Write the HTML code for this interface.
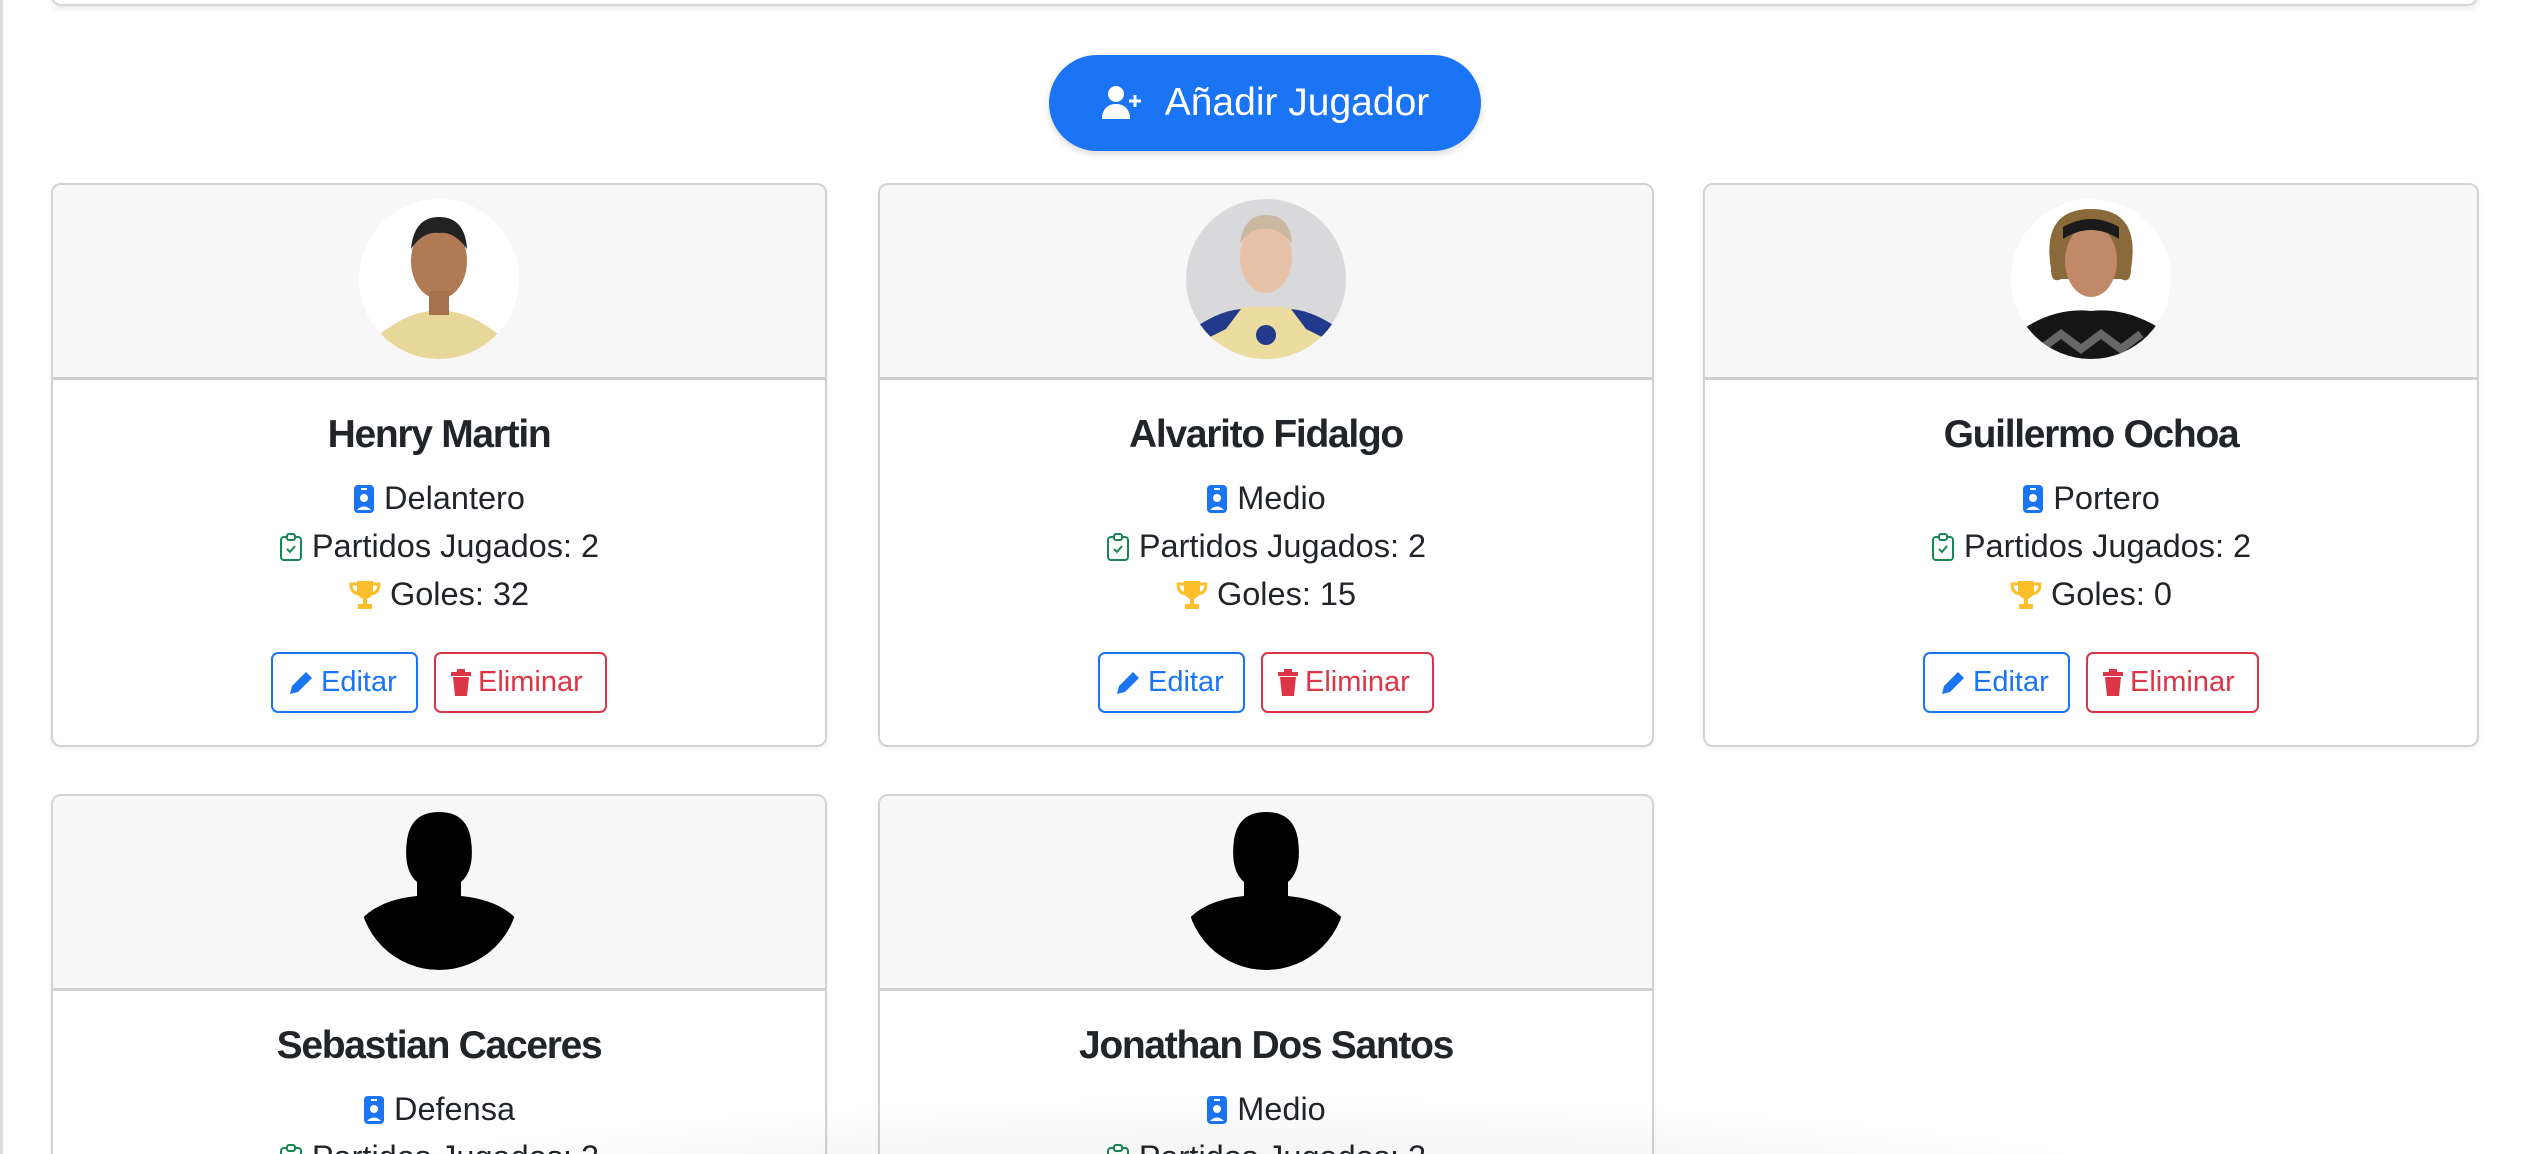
<!DOCTYPE html>
<html style="width:2522px;height:1154px;overflow:hidden"><head><meta charset="utf-8"><style>
*{box-sizing:border-box;margin:0;padding:0}
body{width:2522px;height:1154px;overflow:hidden;background:#fff;font-family:"Liberation Sans",Arial,sans-serif;color:#212529;position:relative}
.vline{position:absolute;left:0;top:0;width:3px;height:1154px;background:#ddd}
.topcard{position:absolute;left:51px;top:-20px;width:2427px;height:26px;border:2px solid #d6d6d6;border-radius:10px;box-shadow:0 3px 6px rgba(0,0,0,.08)}
.add{position:absolute;left:1049px;top:55px;width:432px;height:96px;border-radius:48px;background:#1b74f3;color:#fff;font-size:39px;display:flex;align-items:center;justify-content:center;gap:22px;box-shadow:0 3px 8px rgba(0,0,0,.15)}
.card{position:absolute;width:776px;height:564px;border:2px solid #d2d2d2;border-radius:10px;overflow:hidden;background:#fff;box-shadow:0 2px 5px rgba(0,0,0,.06)}
.hd{height:195px;background:#f7f7f7;border-bottom:3px solid #cfcfcf;position:relative}
.av{position:absolute;left:50%;top:14px;margin-left:-80px;width:160px;height:160px;border-radius:50%;overflow:hidden}
.name{position:absolute;top:228px;width:100%;text-align:center;font-weight:bold;font-size:39px;letter-spacing:-1.3px}
.ln{position:absolute;width:100%;text-align:center;font-size:32.5px;display:flex;justify-content:center;align-items:center;gap:9px}
.btns{position:absolute;top:467px;width:100%;display:flex;justify-content:center;gap:16px}
.b{height:61px;border:2px solid;border-radius:7px;font-size:29px;display:flex;align-items:center;padding:0 14px;gap:6px}
.ed{color:#1b74f3;border-color:#1b74f3;width:147px}
.el{color:#dc3545;border-color:#dc3545;width:173px}
.shade{position:absolute;left:200px;top:1090px;width:2100px;height:120px;background:radial-gradient(ellipse at 50% 100%,rgba(0,0,0,.07),rgba(0,0,0,0) 70%)}
</style></head><body>
<div class="vline"></div>
<div class="topcard"></div>
<div class="add"><svg width="42" height="36" viewBox="0 0 42 36"><circle cx="15" cy="9" r="8" fill="#fff"/><path d="M1 34c0-10 6-15 14-15s14 5 14 15z" fill="#fff"/><path d="M34 10v12M28 16h12" stroke="#fff" stroke-width="3"/></svg><span>Añadir Jugador</span></div>

<div class="card" style="left:51px;top:183px">
 <div class="hd"><div class="av"><svg width="160" height="160"><rect width="160" height="160" fill="#fff"/><path d="M0 160 L15 140 Q50 110 80 112 Q110 110 145 140 L160 160Z" fill="#e8d79a"/><ellipse cx="80" cy="62" rx="28" ry="38" fill="#b07a55"/><path d="M52 50 Q55 18 80 18 Q106 18 108 50 Q95 32 80 34 Q64 32 52 50Z" fill="#222"/><rect x="70" y="92" width="20" height="24" fill="#a8714d"/></svg></div></div>
 <div class="name">Henry Martin</div>
 <div class="ln" style="top:295px"><svg width="22" height="30"><rect x="1" y="1" width="20" height="28" rx="4" fill="#1b74f3"/><circle cx="11" cy="14" r="4" fill="#fff"/><path d="M4 26q7-7 14 0z" fill="#fff"/><rect x="8" y="4" width="6" height="2" fill="#fff"/></svg>Delantero</div>
 <div class="ln" style="top:343px"><svg width="24" height="30"><rect x="2" y="5" width="20" height="23" rx="3" fill="none" stroke="#198754" stroke-width="2"/><rect x="8" y="2" width="8" height="6" rx="2" fill="#fff" stroke="#198754" stroke-width="2"/><path d="M8 17l3 3 5-6" stroke="#198754" stroke-width="2" fill="none"/></svg>Partidos Jugados: 2</div>
 <div class="ln" style="top:391px"><svg width="32" height="32"><path d="M8 2h16v10a8 8 0 0 1-16 0z" fill="#fdbe2c"/><path d="M8 5H2q0 9 8 10M24 5h6q0 9-8 10" stroke="#fdbe2c" stroke-width="3" fill="none"/><rect x="14" y="19" width="4" height="6" fill="#fdbe2c"/><rect x="9" y="25" width="14" height="5" fill="#fdbe2c"/></svg>Goles: 32</div>
 <div class="btns"><div class="b ed"><svg width="28" height="28"><path d="M3 25l2-8L19 3l6 6-14 14z" fill="#1b74f3"/></svg>Editar</div><div class="b el"><svg width="22" height="28"><rect x="1" y="3" width="20" height="4" fill="#dc3545"/><rect x="7" y="0" width="8" height="4" fill="#dc3545"/><path d="M3 8h16l-2 19H5z" fill="#dc3545"/></svg>Eliminar</div></div>
</div>

<div class="card" style="left:878px;top:183px">
 <div class="hd"><div class="av"><svg width="160" height="160"><rect width="160" height="160" fill="#d9d9dc"/><path d="M0 160 L0 135 Q40 105 80 108 Q120 105 160 135 L160 160Z" fill="#ecdca0"/><path d="M0 135 Q30 112 55 110 L40 130 L0 150Z" fill="#223a8c"/><path d="M160 135 Q130 112 105 110 L120 130 L160 150Z" fill="#223a8c"/><ellipse cx="80" cy="58" rx="26" ry="36" fill="#e8c2a8"/><path d="M54 44 Q58 16 80 16 Q104 16 106 44 Q92 28 80 30 Q66 28 54 44Z" fill="#c9b7a0"/><circle cx="80" cy="136" r="10" fill="#223a8c"/></svg></div></div>
 <div class="name">Alvarito Fidalgo</div>
 <div class="ln" style="top:295px"><svg width="22" height="30"><rect x="1" y="1" width="20" height="28" rx="4" fill="#1b74f3"/><circle cx="11" cy="14" r="4" fill="#fff"/><path d="M4 26q7-7 14 0z" fill="#fff"/><rect x="8" y="4" width="6" height="2" fill="#fff"/></svg>Medio</div>
 <div class="ln" style="top:343px"><svg width="24" height="30"><rect x="2" y="5" width="20" height="23" rx="3" fill="none" stroke="#198754" stroke-width="2"/><rect x="8" y="2" width="8" height="6" rx="2" fill="#fff" stroke="#198754" stroke-width="2"/><path d="M8 17l3 3 5-6" stroke="#198754" stroke-width="2" fill="none"/></svg>Partidos Jugados: 2</div>
 <div class="ln" style="top:391px"><svg width="32" height="32"><path d="M8 2h16v10a8 8 0 0 1-16 0z" fill="#fdbe2c"/><path d="M8 5H2q0 9 8 10M24 5h6q0 9-8 10" stroke="#fdbe2c" stroke-width="3" fill="none"/><rect x="14" y="19" width="4" height="6" fill="#fdbe2c"/><rect x="9" y="25" width="14" height="5" fill="#fdbe2c"/></svg>Goles: 15</div>
 <div class="btns"><div class="b ed"><svg width="28" height="28"><path d="M3 25l2-8L19 3l6 6-14 14z" fill="#1b74f3"/></svg>Editar</div><div class="b el"><svg width="22" height="28"><rect x="1" y="3" width="20" height="4" fill="#dc3545"/><rect x="7" y="0" width="8" height="4" fill="#dc3545"/><path d="M3 8h16l-2 19H5z" fill="#dc3545"/></svg>Eliminar</div></div>
</div>

<div class="card" style="left:1703px;top:183px">
 <div class="hd"><div class="av"><svg width="160" height="160"><rect width="160" height="160" fill="#fff"/><path d="M12 160 L12 130 Q45 108 80 112 Q115 108 150 130 L150 160Z" fill="#151515"/><path d="M30 150 L50 135 L70 150 L90 135 L110 150 L130 135" stroke="#666" stroke-width="8" fill="none"/><path d="M40 70 Q30 10 80 10 Q130 10 120 70 Q120 85 110 80 L50 80 Q40 85 40 70Z" fill="#8a6a3a"/><ellipse cx="80" cy="62" rx="26" ry="36" fill="#c08a6a"/><path d="M52 40 Q80 22 108 40 L108 28 Q80 12 52 28Z" fill="#1a1a1a"/></svg></div></div>
 <div class="name">Guillermo Ochoa</div>
 <div class="ln" style="top:295px"><svg width="22" height="30"><rect x="1" y="1" width="20" height="28" rx="4" fill="#1b74f3"/><circle cx="11" cy="14" r="4" fill="#fff"/><path d="M4 26q7-7 14 0z" fill="#fff"/><rect x="8" y="4" width="6" height="2" fill="#fff"/></svg>Portero</div>
 <div class="ln" style="top:343px"><svg width="24" height="30"><rect x="2" y="5" width="20" height="23" rx="3" fill="none" stroke="#198754" stroke-width="2"/><rect x="8" y="2" width="8" height="6" rx="2" fill="#fff" stroke="#198754" stroke-width="2"/><path d="M8 17l3 3 5-6" stroke="#198754" stroke-width="2" fill="none"/></svg>Partidos Jugados: 2</div>
 <div class="ln" style="top:391px"><svg width="32" height="32"><path d="M8 2h16v10a8 8 0 0 1-16 0z" fill="#fdbe2c"/><path d="M8 5H2q0 9 8 10M24 5h6q0 9-8 10" stroke="#fdbe2c" stroke-width="3" fill="none"/><rect x="14" y="19" width="4" height="6" fill="#fdbe2c"/><rect x="9" y="25" width="14" height="5" fill="#fdbe2c"/></svg>Goles: 0</div>
 <div class="btns"><div class="b ed"><svg width="28" height="28"><path d="M3 25l2-8L19 3l6 6-14 14z" fill="#1b74f3"/></svg>Editar</div><div class="b el"><svg width="22" height="28"><rect x="1" y="3" width="20" height="4" fill="#dc3545"/><rect x="7" y="0" width="8" height="4" fill="#dc3545"/><path d="M3 8h16l-2 19H5z" fill="#dc3545"/></svg>Eliminar</div></div>
</div>

<div class="card" style="left:51px;top:794px;height:380px">
 <div class="hd"><div class="av"><svg width="160" height="160"><path d="M0 112 Q18 90 58 86 L58 72 Q44 60 48 30 Q52 2 80 2 Q108 2 112 30 Q116 60 102 72 L102 86 Q142 90 160 112 Q130 160 80 160 Q30 160 0 112Z" fill="#000"/></svg></div></div>
 <div class="name">Sebastian Caceres</div>
 <div class="ln" style="top:295px"><svg width="22" height="30"><rect x="1" y="1" width="20" height="28" rx="4" fill="#1b74f3"/><circle cx="11" cy="14" r="4" fill="#fff"/><path d="M4 26q7-7 14 0z" fill="#fff"/><rect x="8" y="4" width="6" height="2" fill="#fff"/></svg>Defensa</div>
 <div class="ln" style="top:343px"><svg width="24" height="30"><rect x="2" y="5" width="20" height="23" rx="3" fill="none" stroke="#198754" stroke-width="2"/><rect x="8" y="2" width="8" height="6" rx="2" fill="#fff" stroke="#198754" stroke-width="2"/></svg>Partidos Jugados: 2</div>
</div>

<div class="card" style="left:878px;top:794px;height:380px">
 <div class="hd"><div class="av"><svg width="160" height="160"><path d="M0 112 Q18 90 58 86 L58 72 Q44 60 48 30 Q52 2 80 2 Q108 2 112 30 Q116 60 102 72 L102 86 Q142 90 160 112 Q130 160 80 160 Q30 160 0 112Z" fill="#000"/></svg></div></div>
 <div class="name">Jonathan Dos Santos</div>
 <div class="ln" style="top:295px"><svg width="22" height="30"><rect x="1" y="1" width="20" height="28" rx="4" fill="#1b74f3"/><circle cx="11" cy="14" r="4" fill="#fff"/><path d="M4 26q7-7 14 0z" fill="#fff"/><rect x="8" y="4" width="6" height="2" fill="#fff"/></svg>Medio</div>
 <div class="ln" style="top:343px"><svg width="24" height="30"><rect x="2" y="5" width="20" height="23" rx="3" fill="none" stroke="#198754" stroke-width="2"/><rect x="8" y="2" width="8" height="6" rx="2" fill="#fff" stroke="#198754" stroke-width="2"/></svg>Partidos Jugados: 2</div>
</div>
<div class="shade"></div>
</body></html>
